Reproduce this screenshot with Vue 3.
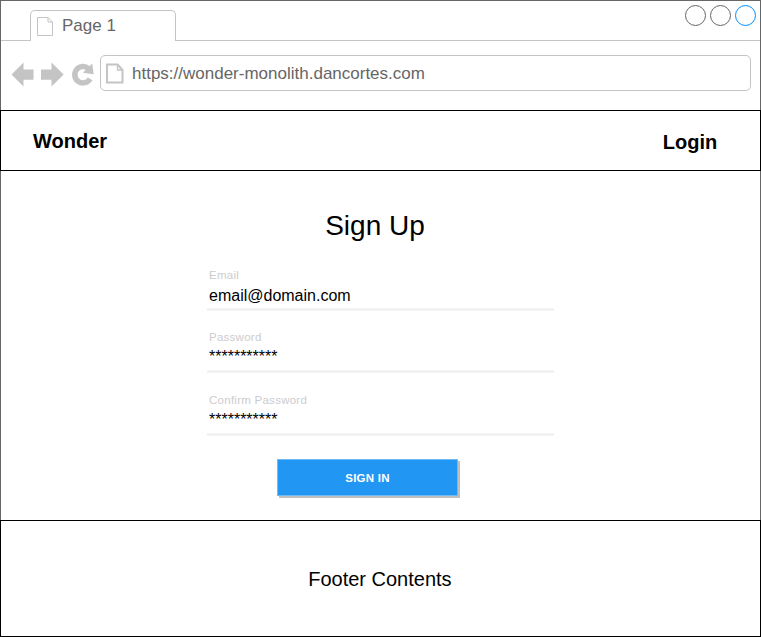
<script setup>
const fields = [
  { label: 'Email', value: 'email@domain.com', cls: 'email' },
  { label: 'Password', value: '***********', cls: 'password' },
  { label: 'Confirm Password', value: '***********', cls: 'confirm' },
]
</script>

<template>
  <div class="window">
    <div class="tabs">
      <div class="lead"></div>
      <div class="tab">
        <svg width="18" height="21" viewBox="0 0 18 21" fill="none" stroke="#c4c4c4">
          <path d="M1.5 1.5H12L16.5 6V19.5H1.5ZM12 1.5V6H16.5" />
        </svg>
        <span>Page 1</span>
      </div>
      <div class="rest">
        <svg width="74" height="24" viewBox="0 0 74 24" fill="none">
          <circle cx="12.5" cy="11.5" r="10" stroke="#666" />
          <circle cx="37.5" cy="11.5" r="10" stroke="#666" />
          <circle cx="62.5" cy="11.5" r="10" stroke="#008cff" />
        </svg>
      </div>
    </div>

    <div class="toolbar">
      <svg class="nav" width="99" height="36" viewBox="0 0 99 36" fill="#c4c4c4">
        <path d="M10.500 19.500L22.500 7.500V14.500H32.500V24.800H22.500V31.500Z" />
        <path d="M62.600 19.500L50.500 7.500V14.500H40V24.800H50.500V31.500Z" />
        <path d="M89.100 23.800A8.200 8.200 0 1 1 87.500 13.600" fill="none" stroke="#c4c4c4" stroke-width="5.500" />
        <path d="M91.200 8.500L92.700 19.300L81.800 17.800Z" />
      </svg>
      <div class="address">
        <svg width="20" height="22" viewBox="0 0 20 22" fill="none" stroke="#c4c4c4" stroke-width="2">
          <path d="M2 1.500H12.500L17.500 7V19.500H2Z" />
          <path d="M12.500 1.500V7H17.500" stroke-width="1.300" />
        </svg>
        <span>https://wonder-monolith.dancortes.com</span>
      </div>
    </div>

    <header class="header">
      <span class="brand">Wonder</span>
      <span class="login">Login</span>
    </header>

    <main class="main">
      <h1>Sign Up</h1>
      <div class="form">
        <div v-for="f in fields" :key="f.label" class="field" :class="f.cls">
          <label>{{ f.label }}</label>
          <div class="value">{{ f.value }}</div>
        </div>
      </div>
      <button>SIGN IN</button>
    </main>

    <footer class="footer">Footer Contents</footer>
  </div>
</template>

<style>
body {
  margin: 0;
  background: #fff;
}
</style>

<style scoped>
.window {
  box-sizing: border-box;
  width: 761px;
  height: 637px;
  display: flex;
  flex-direction: column;
  border: 1px solid #666;
  border-bottom: 0;
  background: #fff;
  font-family: "Liberation Sans", Arial, sans-serif;
  color: #000;
}
.tabs {
  display: flex;
  height: 40px;
  flex: none;
}
.lead,
.rest {
  box-sizing: border-box;
  border-bottom: 1px solid #c4c4c4;
}
.lead {
  width: 29px;
}
.rest {
  flex: 1;
  display: flex;
  justify-content: flex-end;
  padding-top: 3px;
  padding-right: 3px;
}
.tab {
  box-sizing: border-box;
  width: 146px;
  height: 31px;
  margin-top: 9px;
  border: 1px solid #c4c4c4;
  border-bottom: 0;
  border-radius: 5px 5px 0 0;
  display: flex;
  padding: 5px 0 0 5px;
  font-size: 17px;
  line-height: 20px;
  color: #666;
}
.tab span {
  margin-left: 8px;
}
.toolbar {
  display: flex;
  height: 69px;
  padding-top: 14px;
  box-sizing: border-box;
  flex: none;
}
.address {
  box-sizing: border-box;
  width: 651px;
  height: 36px;
  border: 1px solid #c4c4c4;
  border-radius: 5px;
  display: flex;
  padding: 7px 0 0 4px;
  font-size: 17px;
  line-height: 22px;
  color: #666;
}
.address span {
  margin-left: 7px;
}
.header,
.footer {
  box-sizing: border-box;
  margin: 0 -1px;
  border: 1px solid #000;
  flex: none;
}
.header {
  height: 61px;
  display: flex;
  justify-content: space-between;
  padding: 18px 42.800px 0 32px;
  font-size: 20px;
  line-height: 24px;
  font-weight: bold;
}
.login {
  padding-top: 1px;
}
.main {
  height: 349px;
  flex: none;
  display: flex;
  flex-direction: column;
}
h1 {
  margin: 38px 0 0 324.2px;
  font-size: 28px;
  line-height: 34px;
  font-weight: normal;
}
.form {
  width: 347px;
  margin: 24px 0 0 206px;
}
.field {
  box-sizing: border-box;
  padding-left: 2px;
  border-bottom: 1px solid #ededed;
  box-shadow: 0 1px #f6f6f6, inset 0 -1px #f6f6f6;
}
.email {
  height: 43px;
}
.password {
  height: 62px;
  padding-top: 19px;
}
.confirm {
  height: 63px;
  padding-top: 20px;
}
label {
  display: block;
  font-size: 11.5px;
  letter-spacing: 0.26px;
  line-height: 16px;
  color: #ccc;
}
.value {
  font-size: 16px;
  line-height: 18px;
  padding-top: 4px;
}
.field:not(.email) .value {
  padding-top: 3px;
}
button {
  box-sizing: border-box;
  width: 181px;
  height: 37px;
  margin: 24px 0 0 276px;
  padding: 0;
  border: 1px solid #6fbbf8;
  background: #2196f3;
  box-shadow: 2px 2px 0 #bfbfbf;
  font-family: inherit;
  font-size: 11.5px;
  letter-spacing: 0.25px;
  font-weight: bold;
  color: #fff;
}
.footer {
  height: 117px;
  padding: 46px 0 0 307.200px;
  font-size: 20px;
  line-height: 24px;
}
</style>
